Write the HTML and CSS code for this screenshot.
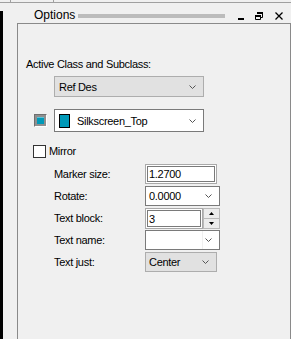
FILE: index.html
```html
<!DOCTYPE html>
<html lang="en">
<head>
  <meta charset="UTF-8" />
  <title>Options</title>
  <link rel="stylesheet" href="styles.css">
</head>
<body>

  <div class="topbar">
    <div class="tab tab-a"></div>
    <div class="tab tab-b"></div>
  </div>

  <div class="main">
    <div class="strip"></div>

    <div class="dock">
      <div class="dock-head">
        <span class="dock-title">Options</span>
        <span class="grip"></span>
        <svg class="win-icon" width="6" height="8" viewBox="0 0 6 8"><rect x="0" y="6" width="6" height="2" fill="#000"/></svg>
        <svg class="win-icon restore" width="8" height="8" viewBox="0 0 8 8">
          <rect x="2" y="0" width="6" height="2" fill="#000"/>
          <path d="M7.5 2 V5.5 H6" fill="none" stroke="#000"/>
          <rect x="0" y="3" width="6" height="2" fill="#000"/>
          <path d="M0.5 5 V7.5 H5.5 V5" fill="none" stroke="#000"/>
        </svg>
        <svg class="win-icon close" width="8" height="8" viewBox="0 0 8 8">
          <path d="M0.5 0.5 L7.5 7.5 M7.5 0.5 L0.5 7.5" stroke="#000" stroke-width="1.3"/>
        </svg>
      </div>

      <div class="panel">
        <div class="section-label">Active Class and Subclass:</div>

        <div class="combo combo-gray class-combo">
          <span class="combo-text">Ref Des</span>
          <svg class="chev" width="7" height="4" viewBox="0 0 7 4"><path d="M0.5 0.5 L3.5 3.5 L6.5 0.5" fill="none" stroke="#555"/></svg>
        </div>

        <div class="color-row">
          <span class="swatch-btn"><span class="swatch-btn-inner"></span></span>
          <div class="combo combo-white subclass-combo">
            <span class="swatch"></span>
            <span class="combo-text">Silkscreen_Top</span>
            <svg class="chev" width="7" height="4" viewBox="0 0 7 4"><path d="M0.5 0.5 L3.5 3.5 L6.5 0.5" fill="none" stroke="#555"/></svg>
          </div>
        </div>

        <label class="check-row">
          <span class="checkbox"></span>
          <span>Mirror</span>
        </label>

        <div class="fields">
          <div class="field">
            <span class="field-label">Marker size:</span>
            <div class="edit edit-wide">1.2700</div>
          </div>
          <div class="field">
            <span class="field-label">Rotate:</span>
            <div class="combo combo-white field-combo">
              <span class="combo-text">0.0000</span>
              <svg class="chev" width="7" height="4" viewBox="0 0 7 4"><path d="M0.5 0.5 L3.5 3.5 L6.5 0.5" fill="none" stroke="#555"/></svg>
            </div>
          </div>
          <div class="field">
            <span class="field-label">Text block:</span>
            <div class="spinner">
              <div class="edit edit-spin">3</div>
              <div class="spin-btns">
                <span class="spin-up"><svg width="5" height="3" viewBox="0 0 5 3"><path d="M0 3 L2.5 0 L5 3 Z" fill="#000"/></svg></span>
                <span class="spin-down"><svg width="5" height="3" viewBox="0 0 5 3"><path d="M0 0 L2.5 3 L5 0 Z" fill="#000"/></svg></span>
              </div>
            </div>
          </div>
          <div class="field">
            <span class="field-label">Text name:</span>
            <div class="combo combo-white field-combo name-combo">
              <span class="combo-text"></span>
              <span class="drop-sep"></span>
              <svg class="chev" width="7" height="4" viewBox="0 0 7 4"><path d="M0.5 0.5 L3.5 3.5 L6.5 0.5" fill="none" stroke="#555"/></svg>
            </div>
          </div>
          <div class="field">
            <span class="field-label">Text just:</span>
            <div class="combo combo-gray just-combo">
              <span class="combo-text">Center</span>
              <svg class="chev" width="7" height="4" viewBox="0 0 7 4"><path d="M0.5 0.5 L3.5 3.5 L6.5 0.5" fill="none" stroke="#555"/></svg>
            </div>
          </div>
        </div>
      </div>
    </div>
  </div>

</body>
</html>
```

FILE: styles.css
```css
* {
  margin: 0;
  padding: 0;
  box-sizing: border-box;
}

body {
  width: 291px;
  height: 339px;
  overflow: hidden;
  background: #f0f0f0;
  font-family: 'Liberation Sans', Arial, sans-serif;
  font-size: 11px;
  letter-spacing: -0.3px;
  color: #000;
}

.topbar {
  height: 3px;
  border-bottom: 1px solid #a0a0a0;
  display: flex;
}

.tab {
  height: 2px;
  border-right: 1px solid #a0a0a0;
}

.tab-a {
  width: 11px;
}

.tab-b {
  width: 43px;
}

.main {
  display: flex;
  height: 336px;
}

.strip {
  width: 3px;
  margin-top: 8px;
  background: #000;
}

.dock {
  flex: 1;
  display: flex;
  flex-direction: column;
}

.dock-head {
  height: 20px;
  display: flex;
  align-items: center;
  padding: 0 8px 0 31px;
}

.dock-title {
  font-size: 12px;
  letter-spacing: 0;
  line-height: 14px;
  margin-top: 3px;
}

.grip {
  flex: 1;
  height: 4px;
  margin: 6px 13px 0 3px;
  background: #bcbcbc;
}

.win-icon {
  display: block;
  margin-top: 5px;
}

.restore {
  margin-left: 11px;
}

.close {
  margin-left: 12px;
}

.panel {
  flex: 1;
  border-top: 1px solid #8a8a8a;
  border-left: 1px solid #8a8a8a;
  border-right: 1px solid #8a8a8a;
  margin-left: 14px;
  padding-top: 34px;
}

.section-label {
  line-height: 13px;
  padding-left: 8px;
}

.combo {
  display: flex;
  align-items: center;
  padding: 0 7px 0 4px;
}

.combo-gray {
  background: #e1e1e1;
  border: 1px solid #adadad;
}

.combo-white {
  background: #fff;
  border: 1px solid #7a7a7a;
}

.combo-text {
  flex: 1;
  white-space: nowrap;
}

.chev {
  display: block;
  flex-shrink: 0;
}

.class-combo {
  width: 150px;
  height: 21px;
  margin: 5px 0 0 36px;
}

.color-row {
  display: flex;
  align-items: center;
  gap: 7px;
  margin-top: 12px;
  padding-left: 16px;
}

.swatch-btn {
  width: 13px;
  height: 13px;
  background: #8f8f8f;
  border-top: 1px solid #6f6f6f;
  border-left: 1px solid #6f6f6f;
  border-bottom: 1px solid #fff;
  border-right: 1px solid #fff;
  padding: 2px;
}

.swatch-btn-inner {
  display: block;
  width: 100%;
  height: 100%;
  background: #0099b8;
  border-top: 1px solid #5fc2d6;
}

.subclass-combo {
  width: 150px;
  height: 23px;
  padding-left: 4px;
}

.swatch {
  width: 11px;
  height: 14px;
  background: #0099b8;
  border: 1px solid #000;
  margin-right: 7px;
}

.check-row {
  display: flex;
  align-items: center;
  gap: 3px;
  margin-top: 13px;
  padding-left: 15px;
  line-height: 13px;
}

.checkbox {
  width: 13px;
  height: 13px;
  background: #fff;
  border: 1px solid #333;
}

.fields {
  display: flex;
  flex-direction: column;
  gap: 2px;
  margin-top: 6px;
  padding-left: 36px;
}

.field {
  display: flex;
  align-items: center;
  height: 20px;
}

.field-label {
  width: 91px;
}

.edit {
  height: 20px;
  background: #fff;
  border: 1px solid #a9a9a9;
  box-shadow: inset 0 0 0 1px #fff, inset 0 0 0 2px #7a7a7a;
  padding: 3px 3px 0;
  line-height: 13px;
}

.edit-wide {
  width: 72px;
}

.field-combo {
  width: 75px;
  height: 20px;
  padding-left: 3px;
}

.spinner {
  display: flex;
  height: 21px;
}

.edit-spin {
  width: 58px;
  height: 21px;
  padding-top: 4px;
}

.spin-btns {
  width: 17px;
  display: flex;
  flex-direction: column;
  border: 1px solid #b9b9b9;
  background: #ececec;
}

.spin-up,
.spin-down {
  flex: 1;
  display: flex;
  align-items: center;
  justify-content: center;
}

.spin-up {
  border-bottom: 1px solid #b9b9b9;
}

.name-combo {
  position: relative;
}

.drop-sep {
  position: absolute;
  top: 0;
  bottom: 0;
  right: 16px;
  width: 1px;
  background: #f0f0f0;
}

.just-combo {
  width: 72px;
  height: 20px;
  padding-left: 3px;
}
```
